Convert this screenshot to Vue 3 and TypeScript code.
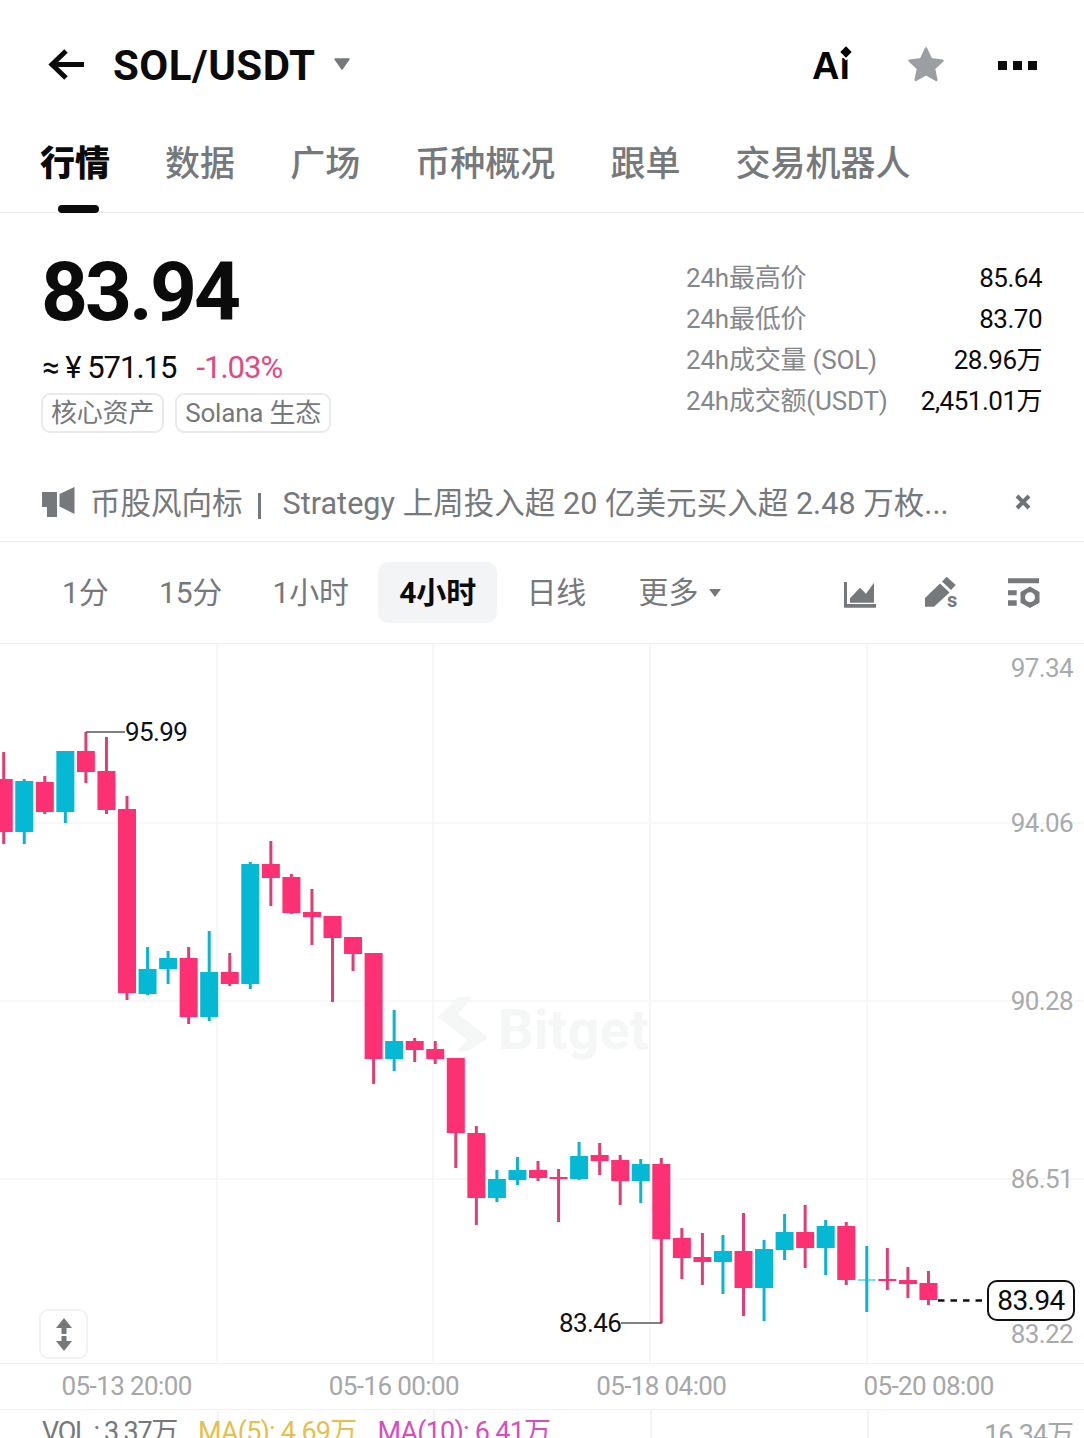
<template>
  <div class="page">
    <header class="topbar">
      <svg class="back" width="38" height="34" viewBox="0 0 38 34">
        <path d="M37 16.500H5M19 3 5 16.500 19 30" fill="none" stroke="#0b0b0b" stroke-width="5" />
      </svg>
      <h1 class="pair">SOL/USDT</h1>
      <svg class="caret" width="18" height="12" viewBox="0 0 18 12">
        <path d="M2 1h14l-7 10z" fill="#76797c" stroke="#76797c" stroke-width="1.500" stroke-linejoin="round" />
      </svg>
      <div class="actions">
        <span class="ai">Ai<i class="diamond"></i></span>
        <svg width="40" height="40" viewBox="0 0 40 40">
          <path
            d="M20 3.500l5 10.800 11.500 1.400-8.500 7.900 2.300 11.400L20 29.200 9.700 35l2.300-11.400-8.500-7.900L15 14.300z"
            fill="#9b9ea3"
            stroke="#9b9ea3"
            stroke-width="2.500"
            stroke-linejoin="round"
          />
        </svg>
        <div class="dots"><i></i><i></i><i></i></div>
      </div>
    </header>

    <nav class="tabs">
      <span v-for="(tab, i) in tabs" :key="tab" class="tab" :class="{ active: i === 0 }">{{ tab }}</span>
    </nav>

    <section class="quote">
      <div class="quote-main">
        <div class="price">83.94</div>
        <div class="fiat">
          <span>≈ ¥ 571.15</span>
          <span class="change">-1.03%</span>
        </div>
        <div class="tags">
          <span class="tag">核心资产</span>
          <span class="tag">Solana 生态</span>
        </div>
      </div>
      <dl class="stats">
        <div v-for="row in stats" :key="row.label" class="stat">
          <dt>{{ row.label }}</dt>
          <dd>{{ row.value }}</dd>
        </div>
      </dl>
    </section>

    <section class="ticker">
      <svg class="ticker-icon" width="36" height="34" viewBox="0 0 36 34">
        <path d="M1 6h15v25H6V21H1zM18.500 8l15-7v27l-15-7.500z" fill="#76797c" />
      </svg>
      <span class="ticker-head">币股风向标</span>
      <i class="ticker-sep"></i>
      <span class="ticker-text">Strategy 上周投入超 20 亿美元买入超 2.48 万枚...</span>
      <svg class="ticker-close" width="18" height="18" viewBox="0 0 18 18">
        <path d="M3 3l12 12M15 3 3 15" stroke="#6f7275" stroke-width="4" />
      </svg>
    </section>

    <section class="periods">
      <span v-for="p in periods" :key="p.label" class="period" :class="{ active: p.active }">{{ p.label }}</span>
      <span class="period more">
        更多
        <svg width="14" height="10" viewBox="0 0 14 10"><path d="M1 1h12L7 9z" fill="#76797c" /></svg>
      </span>
      <div class="tools">
        <svg width="34" height="32" viewBox="844 576 34 32" fill="#76797c">
          <path d="M844 581h3v22h29v3.700h-32z" />
          <path d="M850 601.700v-4.500l10-10.500 6 6 8-11v20z" />
        </svg>
        <svg width="36" height="38" viewBox="925 574 36 38" fill="#76797c">
          <path d="M925 606.700V598l15-14.500 9.500 9L934 606.700z" />
          <path d="M942 581.500l4.700-4.800 9 8.300-4.700 5z" />
          <text x="947" y="607" class="tool-s">s</text>
        </svg>
        <svg width="34" height="32" viewBox="1007 576 34 32" fill="#76797c">
          <path d="M1008 577.300h31v5h-31zM1008 589.300h8.700v5H1008zM1008 599.300h8.700v5.400H1008z" />
          <path
            fill-rule="evenodd"
            d="M1030 585.500l9.500 5.400v10.800l-9.500 5.400-9.500-5.400v-10.800zM1030 591.300a5 5 0 1 0 0 10 5 5 0 0 0 0-10z"
          />
        </svg>
      </div>
    </section>

    <section class="chart">
      <svg class="plot" width="1084" height="719" viewBox="0 644 1084 719">
        <g stroke="#f3f4f5" stroke-width="1.500">
          <line v-for="y in gridY" :key="y" x1="0" x2="1084" :y1="y" :y2="y" />
          <line v-for="x in gridX" :key="x" :x1="x" :x2="x" y1="644" y2="1363" />
        </g>

        <g class="watermark">
          <path d="M458 997l-20 20 30 24-12 10h12l20-13-30-24 14-17z" />
          <text x="498" y="1049">Bitget</text>
        </g>

        <g v-for="(c, i) in candles" :key="i">
          <line
            :x1="candleX(i)"
            :x2="candleX(i)"
            :y1="c[2]"
            :y2="c[3]"
            :stroke="c[4] ? tealWick : redWick"
            stroke-width="3"
          />
          <rect
            :x="candleX(i) - 9"
            :y="c[0]"
            width="18"
            :height="c[1] - c[0]"
            :fill="c[4] ? teal : red"
          />
        </g>

        <path d="M86 732h39M621 1323h41" fill="none" stroke="#55585b" stroke-width="1.500" />
        <path d="M938 1300.500h44" fill="none" stroke="#111" stroke-width="2.500" stroke-dasharray="6.500 6" />

        <text x="125" y="741" class="mark">95.99</text>
        <text x="559" y="1332" class="mark">83.46</text>
        <text v-for="t in yLabels" :key="t.text" x="1073" :y="t.y" text-anchor="end" class="axis-y">{{ t.text }}</text>
      </svg>

      <div class="last-price">83.94</div>

      <button class="scale-btn" type="button">
        <svg width="20" height="34" viewBox="0 0 20 34" fill="#76797c">
          <path d="M10 1l8 10h-5.500v6h-5v-6H2zM7.500 19h5v5H18l-8 10L2 24h5.500z" />
        </svg>
      </button>
    </section>

    <section class="time-axis">
      <span v-for="t in times" :key="t" class="time">{{ t }}</span>
    </section>

    <section class="vol">
      <i v-for="x in gridX" :key="x" class="vol-line" :style="{ left: x + 'px' }"></i>
      <span class="vol-main">VOL : 3.37万</span>
      <span class="ma5">MA(5): 4.69万</span>
      <span class="ma10">MA(10): 6.41万</span>
      <span class="vol-max">16.34万</span>
    </section>
  </div>
</template>

<script setup lang="ts">
// bodyTop, bodyBottom, wickTop, wickBottom, 1 = teal
type Candle = [number, number, number, number, number]

const red = '#fe3074'
const redWick = '#dc3f78'
const teal = '#05b9d4'
const tealWick = '#0cb4d0'

const tabs = ['行情', '数据', '广场', '币种概况', '跟单', '交易机器人']

const stats = [
  { label: '24h最高价', value: '85.64' },
  { label: '24h最低价', value: '83.70' },
  { label: '24h成交量 (SOL)', value: '28.96万' },
  { label: '24h成交额(USDT)', value: '2,451.01万' },
]

const periods = [
  { label: '1分' },
  { label: '15分' },
  { label: '1小时' },
  { label: '4小时', active: true },
  { label: '日线' },
]

const gridX = [217, 433, 650, 867]
const gridY = [823, 1001, 1179]
const yLabels = [
  { text: '97.34', y: 677 },
  { text: '94.06', y: 832 },
  { text: '90.28', y: 1010 },
  { text: '86.51', y: 1188 },
  { text: '83.22', y: 1343 },
]
const times = ['05-13 20:00', '05-16 00:00', '05-18 04:00', '05-20 08:00']

const candles: Candle[] = [
  [779, 832, 752, 844, 0],
  [781, 832, 779, 844, 1],
  [782, 812, 776, 814, 0],
  [751, 812, 751, 823, 1],
  [751, 772, 732, 783, 0],
  [771, 810, 737, 814, 0],
  [809, 993, 796, 1000, 0],
  [969, 994, 947, 995, 1],
  [958, 969, 951, 984, 1],
  [958, 1017, 947, 1024, 0],
  [972, 1017, 931, 1021, 1],
  [972, 984, 953, 986, 0],
  [864, 984, 862, 989, 1],
  [864, 878, 841, 906, 0],
  [877, 913, 874, 914, 0],
  [912, 917, 889, 945, 0],
  [916, 938, 916, 1002, 0],
  [937, 954, 937, 971, 0],
  [953, 1059, 953, 1084, 0],
  [1041, 1059, 1010, 1071, 1],
  [1041, 1050, 1038, 1062, 0],
  [1049, 1059, 1041, 1064, 0],
  [1058, 1133, 1058, 1168, 0],
  [1133, 1198, 1126, 1225, 0],
  [1179, 1198, 1170, 1202, 1],
  [1170, 1180, 1157, 1185, 1],
  [1170, 1178, 1161, 1181, 0],
  [1177, 1179, 1169, 1222, 0],
  [1156, 1179, 1142, 1180, 1],
  [1155, 1161, 1143, 1175, 0],
  [1160, 1181, 1155, 1205, 0],
  [1164, 1181, 1159, 1203, 1],
  [1164, 1239, 1158, 1323, 0],
  [1238, 1258, 1228, 1279, 0],
  [1257, 1262, 1233, 1285, 0],
  [1251, 1262, 1235, 1294, 1],
  [1251, 1288, 1213, 1316, 0],
  [1249, 1288, 1240, 1321, 1],
  [1232, 1250, 1214, 1260, 1],
  [1232, 1248, 1205, 1268, 0],
  [1226, 1248, 1220, 1275, 1],
  [1226, 1280, 1222, 1285, 0],
  [1279.500, 1280.500, 1246, 1312, 1],
  [1279, 1281, 1248, 1290, 0],
  [1280, 1284, 1267, 1298, 0],
  [1283, 1300, 1271, 1305, 0],
]

function candleX(i: number) {
  return 3.7 + 20.55 * i
}
</script>

<style scoped>
.page {
  position: relative;
  width: 1084px;
  height: 1438px;
  overflow: hidden;
  background: #fff;
  color: #0b0b0b;
  font-family: Roboto, 'Noto Sans CJK SC', sans-serif;
}

.topbar {
  display: flex;
  align-items: center;
  height: 130px;
  padding: 0 47px 0 47px;
}

.back {
  margin-right: 28px;
}

.pair {
  margin: 2px 0 0;
  font-size: 42px;
  font-weight: 700;
  line-height: 1;
  letter-spacing: 0.5px;
}

.caret {
  margin: -2px 0 0 17px;
}

.actions {
  display: flex;
  align-items: center;
  margin-left: auto;
}

.ai {
  position: relative;
  margin: 2px 56px 0 0;
  font-family: 'Liberation Sans', sans-serif;
  font-size: 38px;
  font-weight: 700;
  line-height: 1;
  color: #000;
}

.diamond {
  position: absolute;
  top: 1px;
  right: 0;
  width: 8px;
  height: 8px;
  background: #000;
  box-shadow: 0 0 0 2px #fff;
  transform: rotate(45deg);
}

.dots {
  display: flex;
  gap: 6px;
  margin-left: 52px;
}

.dots i {
  width: 9px;
  height: 9px;
  background: #0b0b0b;
}

.tabs {
  display: flex;
  gap: 55.1px;
  height: 83px;
  padding-left: 40px;
  border-bottom: 1px solid #ebecec;
  box-sizing: border-box;
}

.tab {
  position: relative;
  font-size: 35px;
  font-weight: 500;
  line-height: 70px;
  color: #76797c;
}

.tab.active {
  font-weight: 900;
  color: #0b0b0b;
}

.tab.active::after {
  content: '';
  position: absolute;
  left: 18px;
  bottom: -1px;
  width: 41px;
  height: 8px;
  border-radius: 4px;
  background: #0b0b0b;
}

.quote {
  display: flex;
  justify-content: space-between;
  height: 257px;
  padding: 0 42px 0 41px;
  box-sizing: border-box;
}

.price {
  margin-top: 33px;
  margin-left: 0;
  font-size: 82px;
  font-weight: 700;
  line-height: 92px;
  letter-spacing: -3px;
}

.fiat {
  display: flex;
  gap: 20px;
  margin-top: 11px;
  margin-left: 1px;
  font-size: 31px;
  line-height: 38px;
  letter-spacing: -1px;
}

.change {
  color: #e2497f;
}

.tags {
  display: flex;
  gap: 11px;
  margin-top: 6px;
}

.tag {
  padding: 0 8px;
  border: 2.500px solid #e9eaeb;
  border-radius: 9px;
  font-size: 26px;
  line-height: 36px;
  letter-spacing: -0.2px;
  color: #76797c;
}

.stats {
  width: 356px;
  margin: 45px 0 0;
}

.stat {
  display: flex;
  justify-content: space-between;
  height: 41px;
  font-size: 26px;
  line-height: 41px;
  letter-spacing: -0.2px;
}

.stat dt {
  color: #85888b;
}

.stat dd {
  margin: 0;
  color: #0b0b0b;
  letter-spacing: -0.5px;
}

.ticker {
  position: relative;
  display: flex;
  align-items: center;
  height: 72px;
  padding: 0 0 9px 41px;
  border-bottom: 1px solid #ebecec;
  box-sizing: border-box;
  font-size: 30.500px;
  color: #76797c;
}

.ticker-icon {
  margin-top: 4px;
}

.ticker-head {
  margin-left: 13px;
}

.ticker-sep {
  width: 3px;
  height: 26px;
  margin: 9px 22px 0 15px;
  background: #76797c;
}

.ticker-text {
  white-space: nowrap;
  letter-spacing: 0.05px;
}

.ticker-close {
  position: absolute;
  left: 1014px;
  top: 23px;
}

.periods {
  display: flex;
  align-items: center;
  height: 102px;
  padding-left: 41px;
  border-bottom: 1px solid #eeeff0;
  box-sizing: border-box;
  font-size: 30px;
  color: #76797c;
}

.period {
  padding: 0 21px;
  margin-right: 8.500px;
  line-height: 61px;
  border-radius: 10px;
  letter-spacing: -0.2px;
}

.period.active {
  font-weight: 700;
  color: #0b0b0b;
  background: #f3f4f5;
}

.more {
  display: flex;
  align-items: center;
  gap: 10px;
  margin-left: 2px;
}

.tools {
  display: flex;
  align-items: center;
  gap: 46px;
  margin-left: auto;
  margin-right: 43px;
}

.tools svg:first-child {
  margin-right: 1px;
}

.tool-s {
  font-size: 20px;
  font-weight: 700;
  fill: #76797c;
}

.chart {
  position: relative;
  height: 719px;
}

.plot {
  display: block;
}

.watermark {
  fill: #f5f6f6;
  font-size: 56px;
  font-weight: 700;
}

.mark {
  font-size: 26px;
  letter-spacing: -0.6px;
  fill: #111;
}

.axis-y {
  font-size: 26px;
  letter-spacing: -0.6px;
  fill: #a8aaac;
}

.last-price {
  position: absolute;
  left: 987px;
  top: 636px;
  width: 88px;
  height: 41px;
  box-sizing: border-box;
  border: 2px solid #111;
  border-radius: 10px;
  background: #fff;
  font-size: 28px;
  line-height: 37px;
  text-align: center;
  letter-spacing: -0.6px;
}

.scale-btn {
  position: absolute;
  left: 39px;
  top: 665px;
  display: flex;
  align-items: center;
  justify-content: center;
  width: 49px;
  height: 50px;
  padding: 0;
  border: 2px solid #f1f2f3;
  border-radius: 9px;
  background: #fff;
}

.time-axis {
  height: 47px;
  margin-left: -7px;
  border-top: 1.500px solid #f1f2f3;
  border-bottom: 1.500px solid #f1f2f3;
  box-sizing: border-box;
  display: grid;
  grid-template-columns: repeat(4, 267.3px);
}

.time {
  font-size: 26px;
  line-height: 44px;
  text-align: center;
  color: #a5a7a9;
  letter-spacing: -0.6px;
}

.vol {
  position: relative;
  display: flex;
  gap: 21px;
  padding: 4px 0 0 42px;
  font-size: 27px;
  line-height: 36px;
  white-space: nowrap;
  letter-spacing: -1.350px;
}

.vol-line {
  position: absolute;
  top: 0;
  bottom: -40px;
  width: 1.500px;
  background: #f3f4f5;
}

.vol-main {
  position: relative;
  color: #76797c;
}

.ma5 {
  position: relative;
  color: #e6bf4c;
  letter-spacing: -0.8px;
}

.ma10 {
  position: relative;
  color: #d44fbf;
  letter-spacing: -0.8px;
}

.vol-max {
  position: absolute;
  right: 11px;
  top: 7px;
  letter-spacing: -1px;
  color: #a5a7a9;
}
</style>
